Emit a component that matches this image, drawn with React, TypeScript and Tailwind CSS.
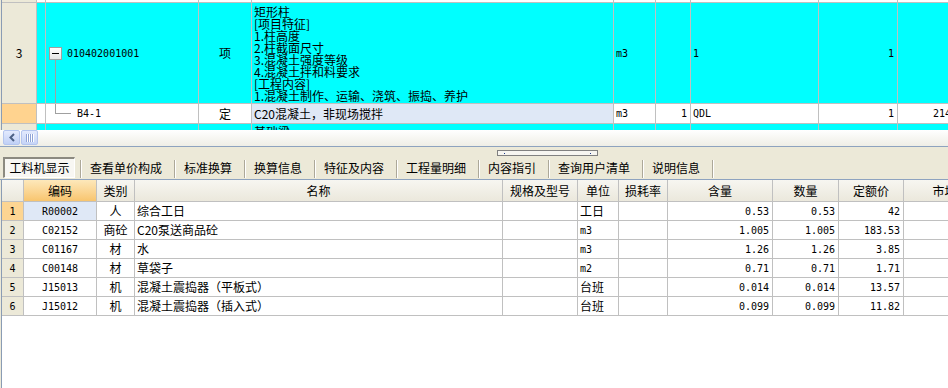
import type { ReactNode } from 'react'

const font = "font-['Noto_Sans_CJK_SC','Noto_Sans',sans-serif]"
const mono = "font-['DejaVu_Sans_Mono','Noto_Sans_CJK_SC',monospace] text-[10px]"

// top grid column widths (including the right grid line)
const TW = ['w-[35px]', 'w-[9px]', 'w-[153px]', 'w-[53px]', 'w-[362px]', 'w-[42px]', 'w-[35px]', 'w-[128px]', 'w-[79px]', 'w-[100px]']
// bottom grid column widths
const BW = ['w-[22px]', 'w-[73px]', 'w-[38px]', 'w-[368px]', 'w-[75px]', 'w-[41px]', 'w-[49px]', 'w-[105px]', 'w-[66px]', 'w-[65px]', 'w-[94px]']

function Cell({ w, className = '', children }: { w: string; className?: string; children?: ReactNode }) {
  return <div className={`${w} shrink-0 h-full border-r border-[#c0c0c0] flex items-center overflow-hidden ${className}`}>{children}</div>
}

const materials = [
  ['R00002', '人', '综合工日', '工日', '0.53', '0.53', '42'],
  ['C02152', '商砼', 'C20泵送商品砼', 'm3', '1.005', '1.005', '183.53'],
  ['C01167', '材', '水', 'm3', '1.26', '1.26', '3.85'],
  ['C00148', '材', '草袋子', 'm2', '0.71', '0.71', '1.71'],
  ['J15013', '机', '混凝土震捣器（平板式）', '台班', '0.014', '0.014', '13.57'],
  ['J15012', '机', '混凝土震捣器（插入式）', '台班', '0.099', '0.099', '11.82'],
]

const tabs = ['查看单价构成', '标准换算', '换算信息', '特征及内容', '工程量明细', '内容指引', '查询用户清单', '说明信息']

const desc = ['矩形柱', '[项目特征]', '1.柱高度', '2.柱截面尺寸', '3.混凝土强度等级', '4.混凝土拌和料要求', '[工程内容]', '1.混凝土制作、运输、浇筑、振捣、养护']

function Sep() {
  return <div className="w-[2px] h-[18px] self-end border-l border-[#aca899] border-r border-r-white shrink-0" />
}

export default function App() {
  return (
    <div className={`w-[948px] h-[388px] overflow-hidden bg-[#ece9d8] flex flex-col text-[12px] text-black ${font}`}>
      {/* upper grid: bill items */}
      <div className="h-[130px] shrink-0 overflow-hidden ml-px border-l border-[#8a9cb4] bg-white">
        <div className="flex h-[3px] border-b border-[#c0c0c0]">
          {TW.map((w, i) => (
            <Cell key={i} w={w} className={i === 0 ? 'bg-[#ece9d8]' : 'bg-white'} />
          ))}
        </div>

        <div className="flex h-[101px] border-b border-[#c0c0c0] bg-[#00ffff]">
          <Cell w={TW[0]} className="bg-[#ece9d8] justify-center">3</Cell>
          <Cell w={TW[1]} />
          <Cell w={TW[2]}>
            <div className="ml-[3px] w-[13px] self-stretch flex flex-col items-center">
              <div className="flex-1" />
              <div className="w-[13px] h-[13px] border border-[#a0a0a0] bg-gradient-to-b from-white to-[#e4e4e4] flex items-center justify-center">
                <div className="w-[7px] h-px bg-black" />
              </div>
              <div className="flex-1 w-px bg-[#a0a0a0]" />
            </div>
            <span className={`ml-[5px] ${mono}`}>010402001001</span>
          </Cell>
          <Cell w={TW[3]} className="justify-center">项</Cell>
          <Cell w={TW[4]} className="items-start">
            <div className="pl-[2px] pt-[3px] leading-[12px]">
              {desc.map((d) => (
                <div key={d}>{d}</div>
              ))}
            </div>
          </Cell>
          <Cell w={TW[5]} className={`pl-[2px] ${mono}`}>m3</Cell>
          <Cell w={TW[6]} />
          <Cell w={TW[7]} className={`pl-[2px] ${mono}`}>1</Cell>
          <Cell w={TW[8]} className={`justify-end pr-[3px] ${mono}`}>1</Cell>
          <Cell w={TW[9]} />
        </div>

        <div className="flex h-[20px] border-b border-[#c0c0c0] bg-white">
          <Cell w={TW[0]} className="bg-[#ffd38f]" />
          <Cell w={TW[1]} />
          <Cell w={TW[2]}>
            <div className="ml-[9px] w-[16px] h-[10px] self-start border-l border-b border-[#a0a0a0]" />
            <span className={`ml-[6px] ${mono}`}>B4-1</span>
          </Cell>
          <Cell w={TW[3]} className="justify-center">定</Cell>
          <Cell w={TW[4]} className="pl-[2px] bg-[#dfe8f6]">C20混凝土，非现场搅拌</Cell>
          <Cell w={TW[5]} className={`pl-[2px] ${mono}`}>m3</Cell>
          <Cell w={TW[6]} className={`justify-end pr-[3px] ${mono}`}>1</Cell>
          <Cell w={TW[7]} className={`pl-[2px] ${mono}`}>QDL</Cell>
          <Cell w={TW[8]} className={`justify-end pr-[3px] ${mono}`}>1</Cell>
          <Cell w={TW[9]} className={`pl-[35px] ${mono}`}>214.94</Cell>
        </div>

        <div className="flex h-[20px] border-b border-[#c0c0c0] bg-[#00ffff]">
          <Cell w={TW[0]} className="bg-[#ece9d8]" />
          <Cell w={TW[1]} />
          <Cell w={TW[2]} />
          <Cell w={TW[3]} />
          <Cell w={TW[4]} className="pl-[2px] items-start pt-[2px] leading-[12px]">基础梁</Cell>
          <Cell w={TW[5]} />
          <Cell w={TW[6]} />
          <Cell w={TW[7]} />
          <Cell w={TW[8]} />
          <Cell w={TW[9]} />
        </div>
      </div>

      {/* horizontal scrollbar */}
      <div className="h-[17px] shrink-0 flex items-end gap-px pl-[3px] pb-px border-b border-[#8ea3bf] bg-gradient-to-b from-white to-[#efeee6]">
        <div className="w-[17px] h-[15px] rounded-[2px] border border-[#b4c5ee] bg-gradient-to-b from-[#e3eafd] to-[#c0d0f6] flex items-center justify-center">
          <svg width="8" height="9" viewBox="0 0 8 9">
            <path d="M6 1 L2.5 4.5 L6 8" fill="none" stroke="#4d6185" strokeWidth="2" />
          </svg>
        </div>
        <div className="w-[17px] h-[15px] rounded-[2px] border border-[#b4c5ee] bg-gradient-to-b from-[#e3eafd] to-[#c6d4f7] flex items-center justify-center">
          <svg width="8" height="8" viewBox="0 0 8 8">
            <path d="M0.5 0 V8 M2.5 0 V8 M4.5 0 V8 M6.5 0 V8" stroke="#8fa3d6" strokeWidth="1" />
            <path d="M1.5 0 V8 M3.5 0 V8 M5.5 0 V8 M7.5 0 V8" stroke="#ffffff" strokeWidth="1" />
          </svg>
        </div>
      </div>

      {/* tab bar */}
      <div className="h-[33px] shrink-0 flex flex-col border-b border-[#8ea3bf]">
        <div className="h-[10px] flex">
          <div className="ml-[497px] mt-[3px] w-[101px] h-[6px] border border-[#808080] bg-[#f6f5f0] flex items-center justify-between px-[6px]">
            <div className="w-px h-px bg-[#1d3a8a]" />
            <div className="w-px h-px bg-[#1d3a8a]" />
          </div>
        </div>
        <div className="h-[21px] flex items-center">
          <div className="ml-[3px] w-[72px] h-[21px] border-t-2 border-l-2 border-t-[#8c8a80] border-l-[#8c8a80] border-b border-r border-b-white border-r-white bg-[#f8f7f3] flex items-center justify-center">
            工料机显示
          </div>
          <div className="ml-[5px] flex h-full">
            {tabs.map((t) => (
              <div key={t} className="flex h-full items-center">
                <Sep />
                <span className="pl-[8px] pr-[12px]">{t}</span>
              </div>
            ))}
            <Sep />
          </div>
        </div>
      </div>

      {/* lower grid: materials */}
      <div className="flex-1 ml-px border-l border-[#8a9cb4] bg-white overflow-hidden">
        <div className="flex h-[22px] border-b border-[#c0c0c0] bg-gradient-to-b from-[#f7f6f1] to-[#ebe8dc]">
          <Cell w={BW[0]} />
          <Cell w={BW[1]} className="justify-center bg-gradient-to-b from-[#fde8ba] to-[#f8c56e]">编码</Cell>
          <Cell w={BW[2]} className="justify-center">类别</Cell>
          <Cell w={BW[3]} className="justify-center">名称</Cell>
          <Cell w={BW[4]} className="justify-center">规格及型号</Cell>
          <Cell w={BW[5]} className="justify-center">单位</Cell>
          <Cell w={BW[6]} className="justify-center">损耗率</Cell>
          <Cell w={BW[7]} className="justify-center">含量</Cell>
          <Cell w={BW[8]} className="justify-center">数量</Cell>
          <Cell w={BW[9]} className="justify-center">定额价</Cell>
          <Cell w={BW[10]} className="justify-center">市场价</Cell>
        </div>
        {materials.map((m, i) => (
          <div key={m[0]} className="flex h-[19px] border-b border-[#c0c0c0]">
            <Cell w={BW[0]} className={`justify-center ${mono} ${i === 0 ? 'bg-[#fdd592]' : 'bg-[#ece9d8]'}`}>{i + 1}</Cell>
            <Cell w={BW[1]} className={`justify-center ${mono} ${i === 0 ? 'bg-[#dfe8f6]' : ''}`}>{m[0]}</Cell>
            <Cell w={BW[2]} className="justify-center">{m[1]}</Cell>
            <Cell w={BW[3]} className="pl-[2px]">{m[2]}</Cell>
            <Cell w={BW[4]} />
            <Cell w={BW[5]} className={`pl-[2px] ${/^m/.test(m[3]) ? mono : ''}`}>{m[3]}</Cell>
            <Cell w={BW[6]} />
            <Cell w={BW[7]} className={`justify-end pr-[3px] ${mono}`}>{m[4]}</Cell>
            <Cell w={BW[8]} className={`justify-end pr-[3px] ${mono}`}>{m[5]}</Cell>
            <Cell w={BW[9]} className={`justify-end pr-[3px] ${mono}`}>{m[6]}</Cell>
            <Cell w={BW[10]} />
          </div>
        ))}
      </div>
    </div>
  )
}
